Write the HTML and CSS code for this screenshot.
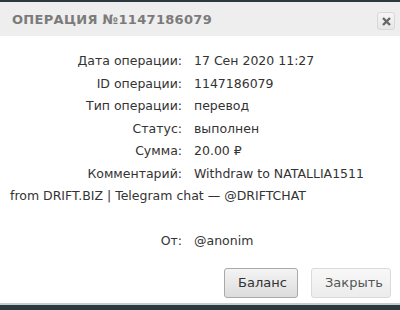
FILE: index.html
```html
<!DOCTYPE html>
<html lang="ru">
<head>
<meta charset="utf-8">
<link rel="stylesheet" href="styles.css">
</head>
<body>
<div class="topbar"></div>
<div class="modal">
  <div class="modal-header">
    <div class="modal-title">Операция №1147186079</div>
    <button class="close-btn" aria-label="Закрыть">
      <svg width="9" height="9" viewBox="0 0 9 9"><path d="M1 1L8 8M8 1L1 8" stroke="#666" stroke-width="2.4" stroke-linecap="butt"/></svg>
    </button>
  </div>
  <div class="modal-body">
    <div class="row"><span class="label">Дата операции:</span><span class="value">17 Сен 2020 11:27</span></div>
    <div class="row"><span class="label">ID операции:</span><span class="value">1147186079</span></div>
    <div class="row"><span class="label">Тип операции:</span><span class="value">перевод</span></div>
    <div class="row"><span class="label">Статус:</span><span class="value">выполнен</span></div>
    <div class="row"><span class="label">Сумма:</span><span class="value">20.00 ₽</span></div>
    <div class="row"><span class="label">Комментарий:</span><span class="value">Withdraw to NATALLIA1511 from DRIFT.BIZ | Telegram chat — @DRIFTCHAT</span></div>
    <div class="row spacer"></div>
    <div class="row"><span class="label">От:</span><span class="value">@anonim</span></div>
  </div>
  <div class="modal-footer">
    <button class="btn btn-primary">Баланс</button>
    <button class="btn btn-light">Закрыть</button>
  </div>
</div>
<div class="bottombar"></div>
</body>
</html>
```

FILE: styles.css
```css
html, body {
  margin: 0;
  padding: 0;
  background: #2c3a40;
}
body {
  width: 400px;
  height: 310px;
  overflow: hidden;
  font-family: "DejaVu Sans", sans-serif;
}
.topbar {
  height: 2px;
  background: #2c3a40;
}
.modal {
  background: #fff;
  height: 301px;
  display: flex;
  flex-direction: column;
  border-bottom: 2px solid #c9cccd;
}
.modal-header {
  height: 34px;
  background: #eeeeee;
  display: flex;
  align-items: center;
  justify-content: space-between;
  padding: 0 5px 0 12px;
}
.modal-title {
  font-size: 13px;
  font-weight: bold;
  color: #7b7b7b;
  text-transform: uppercase;
  letter-spacing: 0.3px;
}
.close-btn {
  width: 18px;
  height: 18px;
  padding: 0;
  border: 1px solid #d8d8d8;
  border-radius: 3px;
  background: linear-gradient(#f6f6f6, #e6e6e6);
  display: flex;
  align-items: center;
  justify-content: center;
  margin-top: 4px;
}
.modal-body {
  padding: 14px 10px 0 10px;
  font-size: 12.5px;
  color: #333;
  line-height: 22.5px;
}
.row {
  min-height: 22.5px;
}
.spacer {
  height: 22.5px;
}
.label {
  display: inline-block;
  width: 172px;
  text-align: right;
  margin-right: 12px;
}
.modal-footer {
  display: flex;
  justify-content: flex-end;
  gap: 13px;
  padding: 15px 9px 0 0;
}
.btn {
  font-family: "DejaVu Sans", sans-serif;
  font-size: 13px;
  color: #333;
  height: 30px;
  border-radius: 3px;
  padding: 0 13px;
}
.btn-primary {
  border: 1px solid #a9a9a9;
  background: linear-gradient(#f4f4f4, #dcdcdc);
  width: 74px;
}
.btn-light {
  border: 1px solid #dadada;
  background: linear-gradient(#f8f8f8, #ececec);
  color: #555;
  width: 80px;
}
.bottombar {
  flex: 1;
}
```
